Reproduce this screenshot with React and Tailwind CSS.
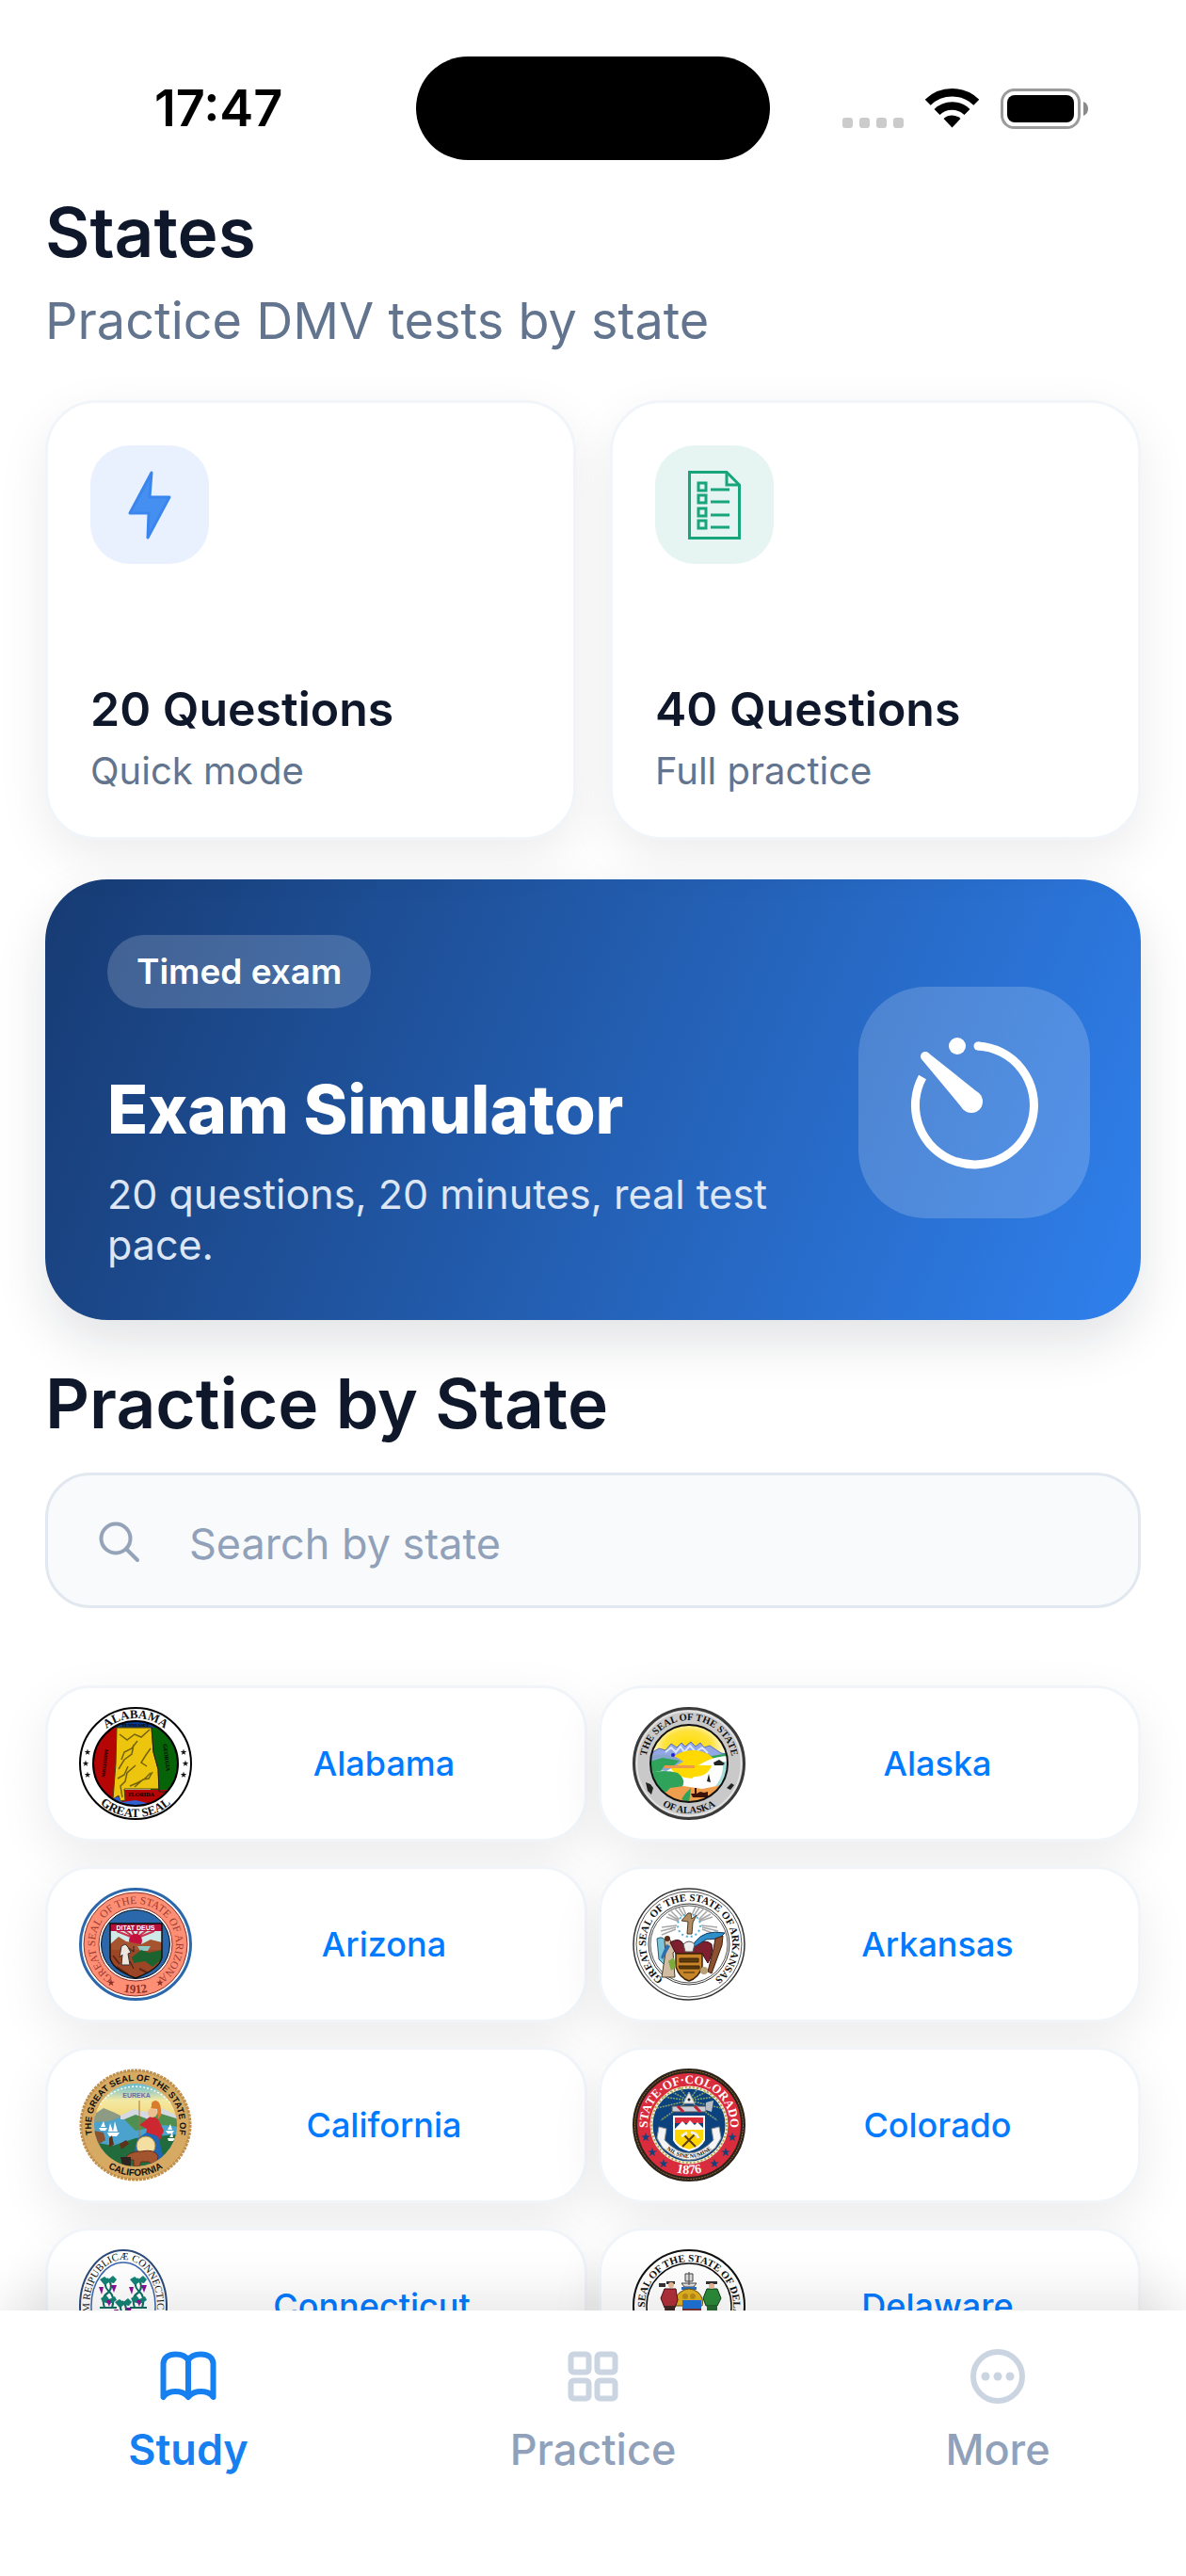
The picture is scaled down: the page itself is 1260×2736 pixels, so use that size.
import React, { useState } from 'react';

const modes = [
  { id: 'quick', title: '20 Questions', subtitle: 'Quick mode', tile: 'bg-[#e9f1fe]', icon: <BoltIcon /> },
  { id: 'full', title: '40 Questions', subtitle: 'Full practice', tile: 'bg-[#e6f5f1]', icon: <ChecklistIcon /> },
];

const states = [
  { name: 'Alabama', seal: <AlabamaSeal /> },
  { name: 'Alaska', seal: <AlaskaSeal /> },
  { name: 'Arizona', seal: <ArizonaSeal /> },
  { name: 'Arkansas', seal: <ArkansasSeal /> },
  { name: 'California', seal: <CaliforniaSeal /> },
  { name: 'Colorado', seal: <ColoradoSeal /> },
  { name: 'Connecticut', seal: <ConnecticutSeal /> },
  { name: 'Delaware', seal: <DelawareSeal /> },
];

const tabs = [
  { id: 'study', label: 'Study', icon: <BookIcon /> },
  { id: 'practice', label: 'Practice', icon: <GridIcon /> },
  { id: 'more', label: 'More', icon: <MoreIcon /> },
];

function BoltIcon() {
  return (
    <svg viewBox="0 0 126 126" className="size-full" aria-hidden="true">
      <path
        d="M65 29 L63 55 L84 55 L61 98 L62 72 L42 72 Z"
        fill="#458ff0"
        stroke="#3a86ee"
        strokeWidth="3"
        strokeLinejoin="round"
      />
    </svg>
  );
}

function ChecklistIcon() {
  return (
    <svg viewBox="0 0 126 126" className="size-full" fill="none" stroke="#18a57c" strokeWidth="3" aria-hidden="true">
      <path d="M36.500 28.500 H76 L89.500 42 V98.500 H36.500 Z" />
      <path d="M76 28.500 V42 H89.500" />
      {[0, 13, 27, 40].map(y => (
        <g key={y}>
          <rect x="46" y={40 + y} width="8" height="8" />
          <path d={`M59 ${47 + y} H79`} />
        </g>
      ))}
    </svg>
  );
}

function TimerIcon() {
  return (
    <svg viewBox="0 0 246 246" className="size-full" aria-hidden="true">
      <path d="M127 63 A63 63 0 1 1 68 96" fill="none" stroke="#fff" strokeWidth="9" />
      <circle cx="127" cy="63" r="4.500" fill="#fff" />
      <circle cx="105" cy="63" r="9" fill="#fff" />
      <circle cx="71" cy="74" r="5" fill="#fff" />
      <circle cx="120" cy="122" r="12" fill="#fff" />
      <path d="M67.500 77.600 L74.500 70.400 L128.400 113.400 L111.600 130.600 Z" fill="#fff" />
    </svg>
  );
}

function SearchIcon() {
  return (
    <svg viewBox="0 0 44 44" className="size-11" fill="none" stroke="#94a3b8" strokeWidth="4" strokeLinecap="round" aria-hidden="true">
      <circle cx="18" cy="18" r="15.500" />
      <path d="M29.500 29.500 L41 41" />
    </svg>
  );
}

function BookIcon() {
  return (
    <svg viewBox="0 0 60 58" className="h-[58px] w-[60px]" fill="none" stroke="currentColor" strokeWidth="6" strokeLinejoin="round" aria-hidden="true">
      <path d="M30 51 C27 47 22 45 16.500 45 C11 45 6 47 3.500 51 V15 C4 9 9 5.500 16.500 5.500 C23 5.500 28 8 30 12 C32 8 37 5.500 43.500 5.500 C51 5.500 56 9 56.500 15 V51 C54 47 49 45 43.500 45 C38 45 33 47 30 51 Z" />
      <path d="M30 12 V50" />
    </svg>
  );
}

function GridIcon() {
  return (
    <svg viewBox="0 0 60 58" className="h-[58px] w-[60px]" fill="none" stroke="#cbd5e1" strokeWidth="6" aria-hidden="true">
      <rect x="6.500" y="5.500" width="19" height="19" rx="3" />
      <rect x="34.500" y="5.500" width="19" height="19" rx="3" />
      <rect x="6.500" y="33.500" width="19" height="19" rx="3" />
      <rect x="34.500" y="33.500" width="19" height="19" rx="3" />
    </svg>
  );
}

function MoreIcon() {
  return (
    <svg viewBox="0 0 60 58" className="h-[58px] w-[60px]" fill="#cbd5e1" aria-hidden="true">
      <circle cx="30" cy="29" r="26" fill="none" stroke="#cbd5e1" strokeWidth="6" />
      <circle cx="17" cy="29" r="4.500" />
      <circle cx="30" cy="29" r="4.500" />
      <circle cx="43" cy="29" r="4.500" />
    </svg>
  );
}

// Lettering that runs round the rim of a seal, centred at the top or the bottom
function RimText({ id, rx, ry = rx, bottom = false, size, fill = '#111', sans = false, bold = true, children }) {
  const path = bottom
    ? `M60 ${60 - ry} A${rx} ${ry} 0 0 0 60 ${60 + ry} A${rx} ${ry} 0 0 0 60 ${60 - ry}`
    : `M60 ${60 + ry} A${rx} ${ry} 0 0 1 60 ${60 - ry} A${rx} ${ry} 0 0 1 60 ${60 + ry}`;
  return (
    <>
      <path id={id} d={path} fill="none" />
      <text
        fontSize={size}
        fill={fill}
        fontWeight={bold ? 700 : 400}
        fontFamily={sans ? '"Liberation Sans", sans-serif' : '"Liberation Serif", serif'}
        textAnchor="middle"
      >
        <textPath href={`#${id}`} startOffset="50%">{children}</textPath>
      </text>
    </>
  );
}

function Star({ x, y, fill = '#111', size = 4 }) {
  const points = Array.from({ length: 10 }, (_, i) => {
    const r = i % 2 ? size * 0.4 : size;
    const a = (Math.PI / 5) * i - Math.PI / 2;
    return `${(x + r * Math.cos(a)).toFixed(1)},${(y + r * Math.sin(a)).toFixed(1)}`;
  }).join(' ');
  return <polygon points={points} fill={fill} />;
}

function SealFrame({ children }) {
  return (
    <svg viewBox="0 0 120 120" className="size-[120px]" aria-hidden="true">
      {children}
    </svg>
  );
}

function AlabamaSeal() {
  return (
    <SealFrame>
      <clipPath id="al-clip"><circle cx="60" cy="60" r="45" /></clipPath>
      <circle cx="60" cy="60" r="59" fill="#fff" stroke="#000" strokeWidth="2" />
      <g clipPath="url(#al-clip)">
        <rect x="10" y="10" width="35" height="100" fill="#b50505" />
        <rect x="76" y="10" width="35" height="82" fill="#076307" />
        <rect x="10" y="10" width="100" height="12" fill="#0c3c8c" />
        <rect x="30" y="96" width="70" height="14" fill="#b50505" />
        <path d="M47 88 H93 V99 H47 Z" fill="#b50505" />
        <path d="M40 22 H77 L79 48 L84 66 L85 87 H48 L49 99 L44 100 L42 94 L36 98 L39 60 Z" fill="#edc50f" stroke="#4d4306" />
        <path d="M77 22 L79 48 L84 66 L85 90 H105" fill="none" stroke="#222" />
        <path d="M34 98 L42 95 L45 101 L60 99 L76 103 L88 100 L80 110 H40 Z" fill="#2f62cf" />
        <path d="M43 29 l8 6 8 -6 7 3 9 -8 M62 36 l-6 8 -8 4 -3 8 M58 40 l-2 10 -8 6 -6 10 M76 44 l-5 7 -5 8 6 4 M46 96 l-2 -12 5 -5 2 -9 9 -8 M54 84 l7 -3 8 -4 7 -7 M59 85 l9 -8 6 -1 4 -7 M41 76 l7 -4 4 -9" fill="none" stroke="#72630b" strokeWidth="1.500" />
        <text x="66" y="95" fontSize="6" textAnchor="middle" fontFamily='"Liberation Serif", serif' fontWeight="700">FLORIDA</text>
        <text x="60" y="21" fontSize="5" textAnchor="middle" fontFamily='"Liberation Serif", serif' fontWeight="700">TENNESSEE</text>
        <text x="29" y="60" fontSize="5" textAnchor="middle" transform="rotate(-83 29 60)" fontFamily='"Liberation Serif", serif' fontWeight="700">MISSISSIPPI</text>
        <text x="91" y="54" fontSize="6" textAnchor="middle" transform="rotate(83 91 54)" fontFamily='"Liberation Serif", serif' fontWeight="700">GEORGIA</text>
      </g>
      <circle cx="60" cy="60" r="45" fill="none" stroke="#000" strokeWidth="2" />
      <RimText id="al-top" rx={48} size={13}>ALABAMA</RimText>
      <RimText id="al-bottom" rx={57} size={13} bottom>GREAT SEAL</RimText>
      {[48, 60, 72].map(y => (
        <g key={y}>
          <Star x={y === 60 ? 7 : 9} y={y} size={3.500} />
          <Star x={y === 60 ? 113 : 111} y={y} size={3.500} />
        </g>
      ))}
    </SealFrame>
  );
}

function AlaskaSeal() {
  return (
    <SealFrame>
      <clipPath id="ak-clip"><circle cx="60" cy="60" r="41" /></clipPath>
      <radialGradient id="ak-sun">
        <stop offset="0" stopColor="#ffdc00" />
        <stop offset="0.6" stopColor="#ffe23c" />
        <stop offset="1" stopColor="#fff" />
      </radialGradient>
      <circle cx="60" cy="60" r="58.500" fill="#c9c9c9" stroke="#3a3a3a" strokeWidth="3" />
      <circle cx="60" cy="60" r="55.500" fill="none" stroke="#e6e6e6" strokeWidth="1.500" />
      <g clipPath="url(#ak-clip)">
        <rect width="120" height="120" fill="#fff" />
        <ellipse cx="59" cy="42" rx="42" ry="28" fill="url(#ak-sun)" />
        <path d="M18 50 L28 44 L35 46 L41 39 L47 43 L52 38 L56 42 L62 37 L67 42 L72 38 L76 43 L82 41 L94 49 L102 50 V56 H18 Z" fill="#92a8e4" stroke="#5c6fb4" />
        <path d="M35 48 l6 -5 5 5 5 -6 4 6 6 -7 6 7 7 -5 6 6" fill="none" stroke="#dfe6fb" strokeWidth="2" />
        <path d="M50 52 L70 48 L84 52 L102 49 V57 L80 54 L60 57 Z" fill="#2fa35a" />
        <ellipse cx="64" cy="61" rx="24" ry="15" fill="#ffd900" />
        <path d="M70 62 Q86 52 102 52 V84 Q80 88 64 84 Q60 76 66 74 Q80 74 84 62 Z" fill="#fff" />
        <path d="M96 58 H102 V90 L88 84 Q97 74 96 58 Z" fill="#a5dcd8" />
        <path d="M18 52 Q34 48 48 54 L54 58 L36 68 L18 66 Z" fill="#88a5d0" />
        <path d="M18 58 L32 54 L50 57 L44 62 L34 62 L30 68 L18 70 Z" fill="#2fa35a" />
        <path d="M34 62 H66 V65 H34 Z" fill="#ed9a4e" />
        <path d="M18 70 Q34 66 48 70 Q58 78 52 86 L40 92 L18 86 Z" fill="#2fa35a" />
        <path d="M30 96 L40 86 L54 84 L74 87 L94 83 L92 92 L74 102 L46 102 Z" fill="#ee9e4c" />
        <path d="M56 92 L62 86 L60 102 L52 98 Z" fill="#2fa35a" />
        <path d="M62 92 h4 v-6 h2 v6 l4 -2 4 1 4 -1 v6 h-16 Z" fill="#3b1207" />
        <path d="M79 79 l2 -8 2 9 Z M86 59 l6 -3 6 4 -2 2 h-9 Z" fill="#222" />
        <circle cx="43" cy="51" r="2" fill="#22c" />
      </g>
      <circle cx="60" cy="60" r="41" fill="none" stroke="#111" strokeWidth="2" />
      <RimText id="ak-top" rx={46} size={10.500}>THE SEAL OF THE STATE</RimText>
      <RimText id="ak-bottom" rx={53} size={10.500} bottom>OF ALASKA</RimText>
      <path d="M14 80 l5 2 3 4 -2 7 -4 -4 Z M100 86 l5 -5 3 2 -4 5 Z" fill="#222" />
    </SealFrame>
  );
}

function ArizonaSeal() {
  return (
    <SealFrame>
      <clipPath id="az-clip"><path d="M33 38 H88 V74 Q86 86 60 96 Q34 86 33 74 Z" /></clipPath>
      <circle cx="60" cy="60" r="58.500" fill="#fff" stroke="#2b67ab" strokeWidth="3" />
      <circle cx="60" cy="60" r="55" fill="#ff8f74" stroke="#8d2f28" />
      <circle cx="60" cy="60" r="39" fill="#fff" stroke="#8d2f28" />
      <circle cx="60" cy="60" r="36.500" fill="#2b67ab" stroke="#111" />
      <g clipPath="url(#az-clip)">
        <rect x="30" y="36" width="60" height="62" fill="#9c4626" />
        <rect x="30" y="44" width="60" height="17" fill="#cfe9e8" />
        <path d="M60 54 L40 46 M60 54 L48 45 M60 54 L56 45 M60 54 L64 45 M60 54 L72 45 M60 54 L80 46" stroke="#cb3150" strokeWidth="2" />
        <circle cx="60" cy="56" r="7" fill="#c4103c" />
        <path d="M33 60 L42 52 L50 57 L66 60 L76 55 L88 58 V66 H33 Z" fill="#a65330" />
        <path d="M62 62 h14 l-3 5 h-8 Z" fill="#8fc7c5" />
        <path d="M56 74 L66 66 L74 69 L88 66 V76 L78 84 L70 78 L58 80 Z" fill="#1d6330" />
        <path d="M45 62 l4 -2 3 3 3 6 -3 1 2 12 h-9 l1 -11 -3 3 Z" fill="#eee6dc" stroke="#333" />
        <path d="M53 64 l5 4 v-6 M54 78 l4 8" stroke="#222" fill="none" />
        <path d="M36 72 l7 9 M64 86 l8 4 M40 84 l12 8" stroke="#5f2814" strokeWidth="2" />
        <rect x="33" y="37" width="55" height="9" fill="#b50f3c" />
        <text x="60" y="45" fontSize="7" fontWeight="700" fontFamily='"Liberation Sans", sans-serif' fill="#fff" textAnchor="middle">DITAT DEUS</text>
      </g>
      <path d="M33 38 H88 V74 Q86 86 60 96 Q34 86 33 74 Z" fill="none" stroke="#111" strokeWidth="1.500" />
      <RimText id="az-top" rx={43} size={11.500} fill="#9c3a32" bold={false}>GREAT SEAL OF THE STATE OF ARIZONA</RimText>
      <RimText id="az-bottom" rx={52} size={13} bottom fill="#8d2f28">1912</RimText>
      <Star x={34} y={101} fill="#8d2f28" />
      <Star x={86} y={101} fill="#8d2f28" />
    </SealFrame>
  );
}

function ArkansasSeal() {
  return (
    <SealFrame>
      <circle cx="60" cy="60" r="59" fill="#fff" stroke="#333" strokeWidth="1.500" />
      <circle cx="60" cy="60" r="56" fill="none" stroke="#555" />
      <circle cx="60" cy="60" r="43" fill="none" stroke="#333" />
      <circle cx="60" cy="60" r="41" fill="none" stroke="#555" />
      <g stroke="#a9a9a9" strokeWidth="1.500">
        <path d="M46 42 L30 46 M46 44 L31 50 M47 40 L31 42 M50 36 L36 31 M50 35 L38 28 M50 34 L41 25 M53 31 L45 22 M55 30 L49 21 M57 29 L53 20 M63 29 L67 20 M65 30 L71 21 M67 31 L76 22 M70 34 L79 25 M70 35 L83 28 M70 36 L85 31 M73 40 L90 42 M74 42 L91 46 M74 44 L90 50" />
      </g>
      <circle cx="60" cy="40" r="12" fill="#fff" stroke="#4fb0dd" strokeWidth="2" strokeDasharray="2 3" />
      <path d="M59 27 h3 l1 6 5 -4 -4 8 -1 12 h-5 l1 -13 -7 -1 Z" fill="#b08d63" stroke="#4a3a26" />
      <path d="M26 54 Q34 50 36 60 L34 82 L28 76 Z" fill="#7cc4da" stroke="#2c5b74" />
      <path d="M34 56 l4 -3 3 4 6 8 -4 4 2 26 H31 l4 -26 Z" fill="#d1bda4" stroke="#4a3a26" />
      <path d="M36 60 l4 2 -8 14 -2 -2 Z" fill="#2d6fae" />
      <circle cx="37" cy="54" r="3" fill="#5b2f1c" />
      <path d="M40 58 Q50 52 54 60 L60 66 L66 60 Q78 54 84 60 Q86 70 80 80 L74 70 H46 Z" fill="#7d1f2e" stroke="#3b0b14" />
      <path d="M66 58 Q76 44 98 48 L92 54 L78 55 L64 64 Z" fill="#2f8fca" stroke="#143a5c" />
      <path d="M88 54 l8 -3 -1 10 -11 30 -4 -2 6 -24 Z" fill="#8b5130" stroke="#3b1f0e" />
      <path d="M54 60 q6 -6 12 0 l-2 8 h-8 Z" fill="#eee" stroke="#555" />
      <path d="M46 70 H74 V84 Q70 96 60 99 Q50 96 46 84 Z" fill="#c98427" stroke="#3b2408" strokeWidth="1.500" />
      <path d="M50 75 h20 v4 H50 Z M49 83 h22 v3 H50 Z M54 90 h12" fill="#5d3a0d" stroke="#3b2408" />
      <path d="M38 78 l6 -4 2 10 -5 4 Z" fill="#7dab3c" />
      <circle cx="76" cy="88" r="4" fill="#b7a174" />
      <RimText id="ar-top" rx={46} size={11}>GREAT SEAL OF THE STATE OF ARKANSAS</RimText>
    </SealFrame>
  );
}

function CaliforniaSeal() {
  return (
    <SealFrame>
      <clipPath id="ca-clip"><circle cx="60" cy="60" r="44" /></clipPath>
      <linearGradient id="ca-sky" x1="0" y1="0" x2="0" y2="1">
        <stop offset="0.3" stopColor="#5fb9d3" />
        <stop offset="0.65" stopColor="#f3e9a4" />
        <stop offset="1" stopColor="#f3d97c" />
      </linearGradient>
      <circle cx="60" cy="60" r="58" fill="#d6aa62" />
      <circle cx="60" cy="60" r="58" fill="none" stroke="#c08f4c" strokeWidth="3" strokeDasharray="3 1" />
      <g clipPath="url(#ca-clip)">
        <rect width="120" height="52" fill="url(#ca-sky)" />
        <rect y="50" width="120" height="40" fill="#4aa2cd" />
        <path d="M14 50 L26 42 L38 47 L46 51 L32 56 L14 57 Z" fill="#8d9a84" />
        <path d="M44 50 L58 43 L70 46 L88 42 L104 50 V54 H44 Z" fill="#d5d9e4" />
        <path d="M48 54 L60 49 L74 54 L84 47 L106 54 V62 L90 60 L60 66 Z" fill="#4f8f51" />
        <path d="M14 78 L36 82 L60 74 L104 70 V108 H14 Z" fill="#226b3d" />
        <path d="M16 66 L26 68 L28 76 L18 82 Z" fill="#8a5231" />
        <path d="M30 68 h13 l-3 4 h-8 Z M31 67 l2 -9 3 9 Z M36 67 l2 -11 3 11 Z M21 63 h9 l-2 3 h-5 Z M23 62 l3 -6 2 6 Z M92 66 h9 l-2 3 h-5 Z M94 74 h8 l-2 3 h-5 Z M94 65 l3 -6 2 6 Z M96 73 l3 -5 1 5 Z" fill="#fff" />
        <path d="M72 54 Q76 48 84 54 L90 66 L86 76 H70 L72 64 L64 60 Z" fill="#cd2832" />
        <path d="M62 74 L72 68 L84 72 L90 96 L80 104 L58 90 Z" fill="#1f66b4" />
        <circle cx="78" cy="47" r="5" fill="#ecc08f" />
        <path d="M77 40 Q76 34 82 34 Q88 36 87 50 L84 54 L83 43 L76 42 Z" fill="#db7c2c" />
        <path d="M64 34 V76" stroke="#a87339" />
        <circle cx="71" cy="82" r="10" fill="#f3dfa1" stroke="#b08d3b" />
        <path d="M50 94 Q54 88 66 88 Q80 85 84 93 L82 103 H78 L74 99 L66 99 L64 104 H58 L58 97 L52 97 Z" fill="#a2552f" stroke="#66301a" />
        <path d="M43 80 l7 -4 3 4 -8 6 Z M32 74 l3 -3 2 10 -5 2 Z" fill="#5b331a" />
        <path d="M44 94 H55 V104 H46 Z" fill="#2d2620" />
        <path d="M22 38 Q36 20 60 19 Q84 20 98 38" fill="none" stroke="#fff" strokeWidth="1.500" strokeDasharray="2 2" />
        <text x="61" y="31" fontSize="7" fontWeight="700" fontFamily='"Liberation Sans", sans-serif' fill="#6d6aa8" textAnchor="middle">EUREKA</text>
      </g>
      <RimText id="ca-top" rx={47} size={9.500} sans>THE GREAT SEAL OF THE STATE OF</RimText>
      <RimText id="ca-bottom" rx={54} size={10} sans bottom>CALIFORNIA</RimText>
    </SealFrame>
  );
}

function ColoradoSeal() {
  return (
    <SealFrame>
      <circle cx="60" cy="60" r="57.500" fill="#d92c3c" stroke="#2b221b" strokeWidth="5" />
      <circle cx="60" cy="60" r="57.500" fill="none" stroke="#9a7434" strokeDasharray="2 1" />
      <circle cx="60" cy="60" r="40" fill="#0c427e" stroke="#f3efe0" strokeWidth="3" />
      <circle cx="60" cy="60" r="40" fill="none" stroke="#b4a546" strokeWidth="2" strokeDasharray="2 2" />
      <path d="M60 34 L32 30 M60 34 L26 42 M60 34 L40 24 M60 34 L30 55 M60 34 L88 30 M60 34 L94 42 M60 34 L80 24 M60 34 L90 55 M60 34 L50 20 M60 34 L70 20" stroke="#8aa568" strokeWidth="1.500" strokeDasharray="2 1" />
      <path d="M60 25 L66 37 H54 Z" fill="#eee" stroke="#aaa" />
      <circle cx="60" cy="33" r="1.500" fill="#222" />
      <path d="M42 40 H78 V46 H42 Z" fill="#c9ccd4" stroke="#555" />
      <path d="M48 40 l6 6 M66 40 l6 6" stroke="#c32034" strokeWidth="3" />
      <path d="M78 36 l8 -2 -2 12 -6 -2 Z" fill="#b8bdc6" />
      <path d="M28 62 L36 64 L34 76 Q60 104 86 76 L84 64 L92 62 L94 74 L88 84 Q60 110 32 84 L26 74 Z" fill="#f5f5f5" stroke="#999" />
      <path d="M44 51 H76 V76 Q72 84 60 87 Q48 84 44 76 Z" fill="#ffd500" stroke="#fff" strokeWidth="2" />
      <path d="M45 52 H75 V65 H45 Z" fill="#0c427e" />
      <path d="M45 52 H75 V58 H45 Z" fill="#d92c3c" />
      <path d="M45 64 L53 56 L57 60 L61 55 L66 60 L69 57 L75 63 V65 H45 Z" fill="#fff" />
      <path d="M54 70 L67 83 M66 70 L53 83" stroke="#5c3b13" strokeWidth="2" />
      <path d="M52 72 L58 68 M62 68 Q68 68 70 74" stroke="#eee" strokeWidth="3" fill="none" />
      <RimText id="co-motto" rx={35} size={6} bottom>NIL SINE NUMINE</RimText>
      <RimText id="co-top" rx={44} size={13} fill="#fff">STATE·OF·COLORADO</RimText>
      <RimText id="co-bottom" rx={52} size={14} bottom fill="#fff">1876</RimText>
      <Star x={14} y={73} fill="#12427c" size={5} />
      <Star x={21} y={89} fill="#12427c" size={5} />
      <Star x={33} y={101} fill="#12427c" size={5} />
      <Star x={106} y={73} fill="#12427c" size={5} />
      <Star x={99} y={89} fill="#12427c" size={5} />
      <Star x={87} y={101} fill="#12427c" size={5} />
    </SealFrame>
  );
}

function Vine({ x, y }) {
  return (
    <g transform={`translate(${x} ${y})`}>
      <path d="M-4 30 Q-8 18 0 14 Q6 8 0 0 M4 30 Q8 18 0 12 Q-6 6 0 -1 M-9 30 H9" fill="none" stroke="#0e6e62" strokeWidth="2" />
      <path d="M-9 0 l5 -3 4 3 5 -4 4 4 -3 4 -5 -1 -5 3 Z M-8 20 l6 -3 3 4 6 -3 2 4 -7 4 -8 -2 Z" fill="#168276" />
      <path d="M-10 8 h5 l-2 8 Z M3 6 h6 l-3 8 Z M-2 22 h5 l-2 7 Z" fill="#8a1392" />
    </g>
  );
}

function ConnecticutSeal() {
  return (
    <svg viewBox="13 0 94 120" className="h-[120px] w-[94px]" aria-hidden="true">
      <ellipse cx="60" cy="60" rx="46" ry="59" fill="#fff" stroke="#2d4a78" strokeWidth="2" />
      <ellipse cx="60" cy="60" rx="34" ry="46" fill="#fff" stroke="#3c66ae" strokeWidth="1.500" />
      <Vine x={44} y={32} />
      <Vine x={76} y={32} />
      <Vine x={60} y={56} />
      <RimText id="ct-rim" rx={36} ry={49} size={11} bold={false}>SIGILLUM REIPUBLICÆ CONNECTICUTENSIS</RimText>
    </svg>
  );
}

function DelawareSeal() {
  return (
    <SealFrame>
      <circle cx="60" cy="60" r="59" fill="#fff" stroke="#111" strokeWidth="2" />
      <circle cx="60" cy="60" r="45" fill="none" stroke="#111" strokeWidth="1.500" />
      <path d="M52 36 h16 l-3 4 h-10 Z M56 34 v-8 h8 v8 Z M60 24 v14" fill="#ddd" stroke="#444" />
      <path d="M52 40 H68 V43 H52 Z" fill="#2a6fc0" />
      <path d="M50 46 Q60 38 70 46 Q76 52 74 60 H46 Q44 52 50 46 Z" fill="#e0b123" stroke="#6d520d" />
      <circle cx="56" cy="50" r="3" fill="#b98c14" />
      <circle cx="64" cy="50" r="3" fill="#b98c14" />
      <rect x="53" y="54" width="20" height="9" fill="#1f74d8" />
      <path d="M53 63 H73 V74 H53 Z" fill="#7c3432" />
      <path d="M34 42 h12 l2 12 -3 8 H34 l-4 -10 Z" fill="#b0303a" stroke="#4b1015" />
      <path d="M34 60 h11 v20 h-10 Z" fill="#3f2a26" />
      <path d="M28 36 h7 v4 h-7 Z M36 34 h9 v3 h-9 Z" fill="#333" />
      <circle cx="41" cy="38" r="3" fill="#e7b998" />
      <path d="M79 42 h11 l4 10 -4 8 H78 l-3 -8 Z" fill="#2c8b3a" stroke="#0f3f18" />
      <path d="M79 60 h11 v20 h-11 Z" fill="#256d30" />
      <path d="M78 34 h12 v3 h-12 Z" fill="#333" />
      <circle cx="84" cy="39" r="3" fill="#e7b998" />
      <RimText id="de-rim" rx={47} size={11}>GREAT SEAL OF THE STATE OF DELAWARE</RimText>
    </SealFrame>
  );
}

function StatusBar() {
  return (
    <div className="grid shrink-0 grid-cols-[1fr_auto_1fr] items-center pt-[60px] pb-[35px]">
      <span className="pl-[164px] text-[54px] leading-[60px] font-semibold text-black">17:47</span>
      <div className="h-[110px] w-[376px] rounded-full bg-black" />
      <div className="flex items-center justify-end gap-[23px] pr-[103px]">
        <div className="flex gap-[7px] self-end pb-px">
          {[0, 1, 2, 3].map(dot => (
            <span key={dot} className="size-[11px] rounded-[3px] bg-[#cbcbcb]" />
          ))}
        </div>
        <svg viewBox="0 0 57 42" className="h-[42px] w-[57px]" aria-hidden="true">
          <path d="M2.700 14.700 A37.200 37.200 0 0 1 54.300 14.700 M12.500 25 A23 23 0 0 1 44.500 25" fill="none" stroke="#000" strokeWidth="8.500" />
          <path d="M19.500 32 A13.500 13.500 0 0 1 37.500 32 L28.500 41.500 Z" />
        </svg>
        <svg viewBox="0 0 94 43" className="h-[43px] w-[94px]" aria-hidden="true">
          <rect x="1.500" y="1.500" width="82" height="40" rx="13" fill="none" stroke="#9b9b9b" strokeWidth="3" />
          <rect x="7" y="7" width="71" height="29" rx="8" />
          <path d="M88 14 Q93 16 93 21.500 Q93 27 88 29 Z" fill="#8a8a8a" />
        </svg>
      </div>
    </div>
  );
}

function ModeCard({ mode }) {
  return (
    <button className="flex min-h-[467px] flex-col justify-between rounded-[54px] border-[3px] border-slate-100 bg-white p-[45px] text-left shadow-[0_18px_54px_rgba(0,0,0,0.08)]">
      <span className={`block size-[126px] rounded-[42px] ${mode.tile}`}>{mode.icon}</span>
      <span className="flex flex-col gap-[11px]">
        <span className="text-[50px] leading-[60px] font-semibold text-slate-900">{mode.title}</span>
        <span className="text-[40px] leading-[50px] text-slate-500">{mode.subtitle}</span>
      </span>
    </button>
  );
}

function StateCard({ state }) {
  return (
    <a
      href={`#${state.name.toLowerCase()}`}
      className="flex items-center rounded-[48px] border-[3px] border-slate-100 bg-white py-5 pr-[9px] pl-[33px] shadow-[0_18px_54px_rgba(0,0,0,0.08)]"
    >
      {state.seal}
      <span className="flex-1 text-center text-[36px] leading-[48px] font-medium text-[#007aff]">{state.name}</span>
    </a>
  );
}

const App = () => {
  const [query, setQuery] = useState('');
  const [activeTab, setActiveTab] = useState('study');

  const visibleStates = states.filter(state =>
    state.name.toLowerCase().includes(query.trim().toLowerCase())
  );

  return (
    <div className="flex h-screen flex-col overflow-hidden bg-white font-['Inter',sans-serif]">
      <StatusBar />

      <main className="min-h-0 flex-1 overflow-hidden px-12">
        <h1 className="text-[73px] leading-[84px] font-semibold text-slate-900">States</h1>
        <p className="mt-5 text-[54px] leading-[64px] text-slate-500">Practice DMV tests by state</p>

        <div className="mt-[52px] grid grid-cols-2 gap-9">
          {modes.map(mode => (
            <ModeCard key={mode.id} mode={mode} />
          ))}
        </div>

        <button className="mt-[42px] flex w-full items-center gap-9 rounded-[66px] bg-linear-[112deg,#173b73,#2f80ed] pt-[59px] pr-[54px] pb-[53px] pl-[66px] text-left shadow-[0_24px_54px_rgba(15,23,42,0.12)]">
          <span className="flex flex-1 flex-col items-start">
            <span className="rounded-full bg-white/18 px-[31px] py-[15px] text-[37px] leading-[48px] font-semibold text-white">
              Timed exam
            </span>
            <span className="mt-[67px] text-[71px] leading-[80px] font-extrabold text-white">Exam Simulator</span>
            <span className="mt-[23px] text-[43px] leading-[54px] text-[#dce6f5]">
              20 questions, 20 minutes, real test pace.
            </span>
          </span>
          <span className="block size-[246px] shrink-0 rounded-[72px] bg-white/18">
            <TimerIcon />
          </span>
        </button>

        <h2 className="mt-[47px] text-[73px] leading-[84px] font-semibold text-slate-900">Practice by State</h2>

        <label className="mt-[31px] flex h-36 items-center gap-[52px] rounded-[48px] border-[3px] border-slate-200 bg-slate-50 px-[54px] pt-1">
          <SearchIcon />
          <input
            type="text"
            aria-label="Search by state"
            value={query}
            onChange={e => setQuery(e.target.value)}
            placeholder="Search by state"
            className="min-w-0 flex-1 bg-transparent pt-1 text-[45px] leading-[60px] text-slate-900 outline-none placeholder:text-slate-400"
          />
        </label>

        <div className="mt-[82px] grid grid-cols-2 gap-x-3 gap-y-[26px]">
          {visibleStates.map(state => (
            <StateCard key={state.name} state={state} />
          ))}
        </div>
      </main>

      <nav className="relative grid shrink-0 grid-cols-3 gap-[30px] bg-white pt-[41px] pb-[106px] shadow-[0_-12px_54px_rgba(0,0,0,0.1)]">
        {tabs.map(tab => (
          <button
            key={tab.id}
            onClick={() => setActiveTab(tab.id)}
            className={`flex flex-col items-center gap-[21px] text-[45px] leading-[56px] ${
              activeTab === tab.id ? 'font-semibold text-[#1680f0]' : 'font-medium text-slate-400'
            }`}
          >
            {tab.icon}
            {tab.label}
          </button>
        ))}
      </nav>
    </div>
  );
};

export default App;
